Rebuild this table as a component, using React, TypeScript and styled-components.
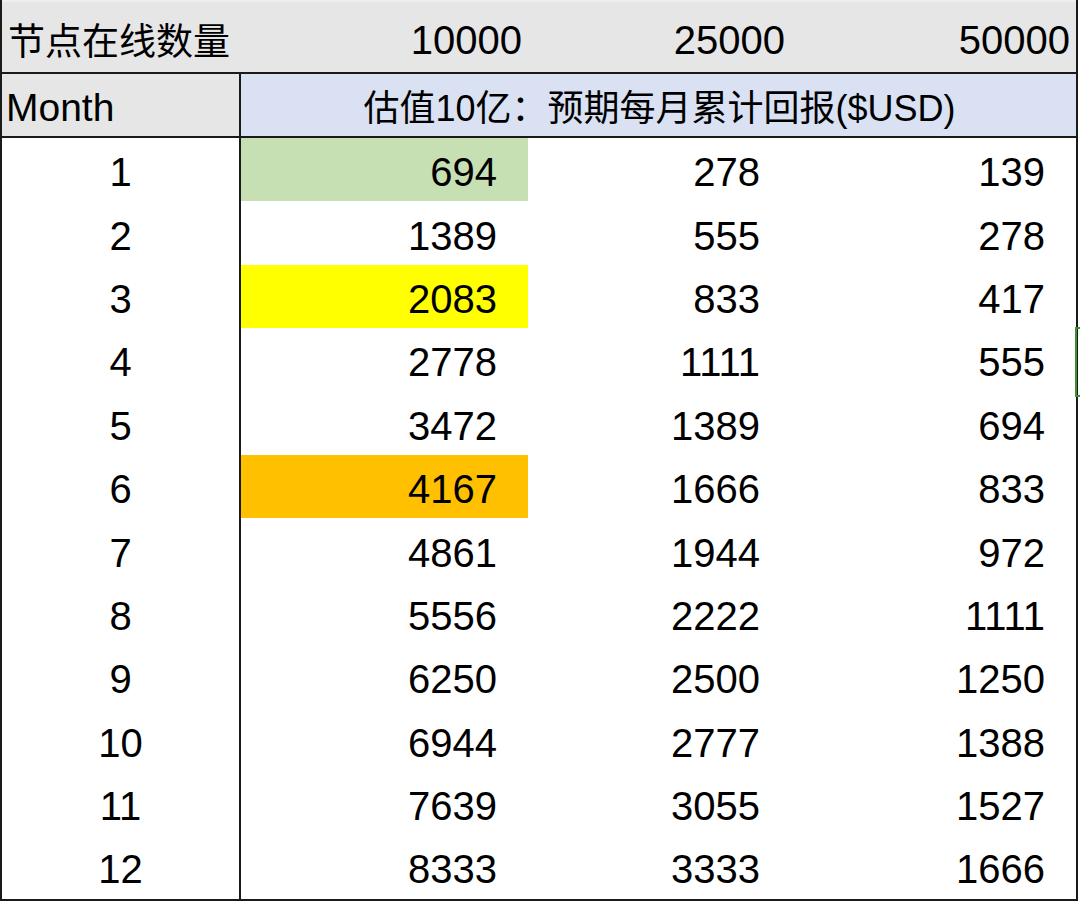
import styled, { createGlobalStyle } from "styled-components";

const GlobalStyle = createGlobalStyle`
  html, body {
    margin: 0;
    padding: 0;
    background: #ffffff;
  }
  body {
    font-family: "Liberation Sans", "Noto Sans CJK SC", sans-serif;
    color: #000;
  }
`

const COLS = '239px 287px 263px 285px'

type Fill = 'green' | 'yellow' | 'orange' | undefined

const fills: Record<string, string> = {
  green: '#c6e0b4',
  yellow: '#ffff00',
  orange: '#ffc000',
}

const rows: { month: number; values: number[]; fill?: Fill }[] = [
  { month: 1, values: [694, 278, 139], fill: 'green' },
  { month: 2, values: [1389, 555, 278] },
  { month: 3, values: [2083, 833, 417], fill: 'yellow' },
  { month: 4, values: [2778, 1111, 555] },
  { month: 5, values: [3472, 1389, 694] },
  { month: 6, values: [4167, 1666, 833], fill: 'orange' },
  { month: 7, values: [4861, 1944, 972] },
  { month: 8, values: [5556, 2222, 1111] },
  { month: 9, values: [6250, 2500, 1250] },
  { month: 10, values: [6944, 2777, 1388] },
  { month: 11, values: [7639, 3055, 1527] },
  { month: 12, values: [8333, 3333, 1666] },
]

const App = () => {
  return (
    <>
      <GlobalStyle />
      <Sheet>
        <NodeRow>
          <NodeLabel>节点在线数量</NodeLabel>
          <NodeCount>10000</NodeCount>
          <NodeCount>25000</NodeCount>
          <NodeCount>50000</NodeCount>
        </NodeRow>
        <TitleRow>
          <MonthLabel>Month</MonthLabel>
          <TitleCell>估值10亿：预期每月累计回报($USD)</TitleCell>
        </TitleRow>
        <Body>
          {rows.map((r) => (
            <DataRow key={r.month}>
              <MonthCell>{r.month}</MonthCell>
              <ValueCell $fill={r.fill}>{r.values[0]}</ValueCell>
              <ValueCell>{r.values[1]}</ValueCell>
              <ValueCell>{r.values[2]}</ValueCell>
            </DataRow>
          ))}
        </Body>
        <Selection />
      </Sheet>
    </>
  )
}

const Sheet = styled.div`
  position: relative;
  width: 1078px;
  box-sizing: border-box;
  border-left: 2px solid #1a1a1a;
  border-right: 2px solid #1a1a1a;
  border-bottom: 2px solid #1a1a1a;
  display: flex;
  flex-direction: column;
`

const NodeRow = styled.div`
  display: grid;
  grid-template-columns: ${COLS};
  background: #e6e6e6;
  border-top: 2px solid #efefef;
  border-bottom: 2px solid #1a1a1a;
  box-sizing: border-box;
  height: 74px;
  align-items: center;
`

const NodeLabel = styled.div`
  font-family: "Noto Sans CJK SC", sans-serif;
  font-size: 37px;
  line-height: 40px;
  padding-left: 6px;
  padding-top: 4px;
  white-space: nowrap;
`

const NodeCount = styled.div`
  font-size: 40px;
  line-height: 40px;
  text-align: right;
  padding-right: 6px;
  padding-top: 6px;
`

const TitleRow = styled.div`
  display: grid;
  grid-template-columns: ${COLS};
  height: 64px;
  box-sizing: border-box;
  border-bottom: 2px solid #1a1a1a;
`

const MonthLabel = styled.div`
  background: #e6e6e6;
  border-right: 2px solid #1a1a1a;
  font-size: 39px;
  padding-left: 4px;
  padding-top: 6px;
  display: flex;
  align-items: center;
`

const TitleCell = styled.div`
  grid-column: 2 / span 3;
  background: #d9e1f2;
  font-family: "Liberation Sans", "Noto Sans CJK SC", sans-serif;
  font-size: 36px;
  display: flex;
  align-items: center;
  justify-content: center;
  white-space: nowrap;
  padding-left: 2px;
`

const Body = styled.div`
  display: flex;
  flex-direction: column;
`

const DataRow = styled.div`
  display: grid;
  grid-template-columns: ${COLS};
  height: 63.4px;
`

const MonthCell = styled.div`
  border-right: 2px solid #1a1a1a;
  font-size: 40px;
  display: flex;
  align-items: center;
  justify-content: center;
  padding-top: 6px;
  box-sizing: border-box;
`

const ValueCell = styled.div<{ $fill?: Fill }>`
  background: ${(p) => (p.$fill ? fills[p.$fill] : 'transparent')};
  font-size: 40px;
  display: flex;
  align-items: center;
  justify-content: flex-end;
  padding-right: 31px;
  padding-top: 6px;
  box-sizing: border-box;
`

const Selection = styled.div`
  position: absolute;
  right: -4px;
  top: 327px;
  width: 3px;
  height: 66px;
  border: 2px solid #3f8f2f;
  border-right: none;
`

export default App
